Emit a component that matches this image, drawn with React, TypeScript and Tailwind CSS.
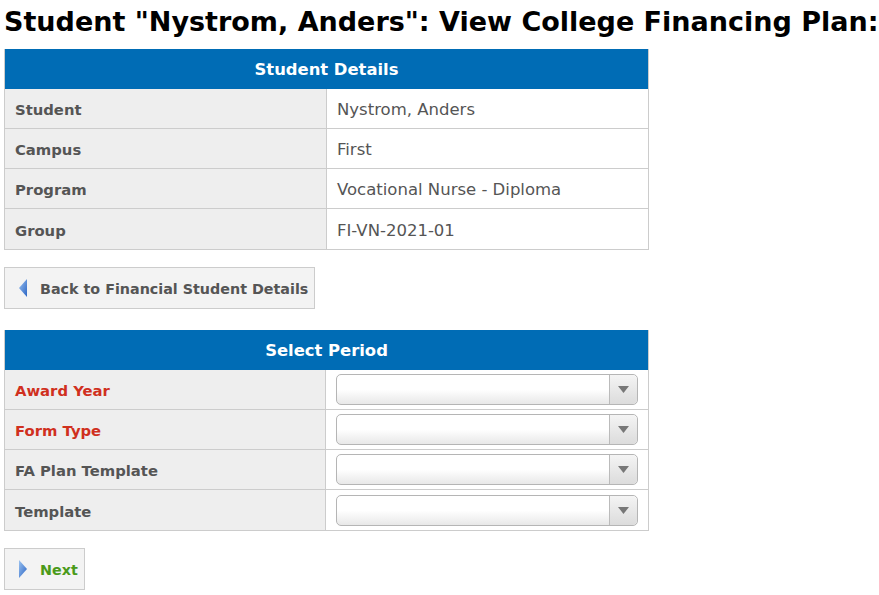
import React from "react";

const font = { fontFamily: '"DejaVu Sans", Verdana, sans-serif' };

function Arrow({ dir }: { dir: "left" | "right" }) {
  return (
    <svg width="12" height="20" viewBox="0 0 12 20" className="shrink-0">
      <defs>
        <linearGradient id={`g-${dir}`} x1="0" y1="0" x2="1" y2="1">
          <stop offset="0" stopColor="#9cc3f0" />
          <stop offset="1" stopColor="#2a64c4" />
        </linearGradient>
      </defs>
      {dir === "left" ? (
        <path d="M10 1 L2 10 L10 19 Z" fill={`url(#g-${dir})`} />
      ) : (
        <path d="M2 1 L10 10 L2 19 Z" fill={`url(#g-${dir})`} />
      )}
    </svg>
  );
}

function Row({ label, children, required }: { label: string; children: React.ReactNode; required?: boolean }) {
  return (
    <div className="flex h-10 border-b border-[#cccccc] last:border-b-0">
      <div
        className={`w-[322px] flex items-center px-[10px] pt-[4px] bg-[#eeeeee] border-r border-[#cccccc] font-bold text-[14.8px] ${
          required ? "text-[#d0301e]" : "text-[#555555]"
        }`}
      >
        {label}
      </div>
      <div className="flex-1 flex items-center px-[10px] text-[16.5px] text-[#555555] bg-white">{children}</div>
    </div>
  );
}

function Value({ children }: { children: React.ReactNode }) {
  return <span className="pt-[4px]">{children}</span>;
}

function Select() {
  return (
    <div className="w-[302px] h-[31px] rounded-[5px] border border-[#b5b5b5] bg-gradient-to-b from-white via-white to-[#e8e8e8] flex justify-end">
      <div className="w-[28px] h-full border-l border-[#bbbbbb] flex items-center justify-center bg-gradient-to-b from-[#f4f4f4] to-[#dcdcdc] rounded-r-[5px]">
        <svg width="11" height="7" viewBox="0 0 11 7">
          <path d="M0 0 L11 0 L5.5 7 Z" fill="#777777" />
        </svg>
      </div>
    </div>
  );
}

function Table({ title, children }: { title: string; children: React.ReactNode }) {
  return (
    <div className="w-[645px] border border-[#cccccc] border-t-0">
      <div className="h-10 pt-[3px] bg-[#006cb5] text-white font-bold text-[16.4px] flex items-center justify-center">
        {title}
      </div>
      {children}
    </div>
  );
}

function Button({ children, dir, color }: { children: React.ReactNode; dir: "left" | "right"; color: string }) {
  return (
    <div
      className={`inline-flex items-center gap-[11px] h-[42px] pl-[12px] pr-[6px] bg-[#f3f3f3] border border-[#cccccc] font-bold text-[14.3px] ${color}`}
    >
      <Arrow dir={dir} />
      <span className="pt-[3px]">{children}</span>
    </div>
  );
}

export default function App() {
  return (
    <div className="w-[879px] h-[595px] bg-white pl-1 overflow-hidden" style={font}>
      <h1 className="text-[27px] font-bold text-black leading-none pt-[8px] pb-[14px] whitespace-nowrap">
        Student "Nystrom, Anders": View College Financing Plan:
      </h1>
      <Table title="Student Details">
        <Row label="Student">
          <Value>Nystrom, Anders</Value>
        </Row>
        <Row label="Campus">
          <Value>First</Value>
        </Row>
        <Row label="Program">
          <Value>Vocational Nurse - Diploma</Value>
        </Row>
        <Row label="Group">
          <Value>FI-VN-2021-01</Value>
        </Row>
      </Table>
      <div className="mt-[17px]">
        <Button dir="left" color="text-[#555555]">
          Back to Financial Student Details
        </Button>
      </div>
      <div className="mt-[21px]">
        <Table title="Select Period">
          <Row label="Award Year" required>
            <Select />
          </Row>
          <Row label="Form Type" required>
            <Select />
          </Row>
          <Row label="FA Plan Template">
            <Select />
          </Row>
          <Row label="Template">
            <Select />
          </Row>
        </Table>
      </div>
      <div className="mt-[17px]">
        <Button dir="right" color="text-[#4a9a1a]">
          Next
        </Button>
      </div>
    </div>
  );
}
